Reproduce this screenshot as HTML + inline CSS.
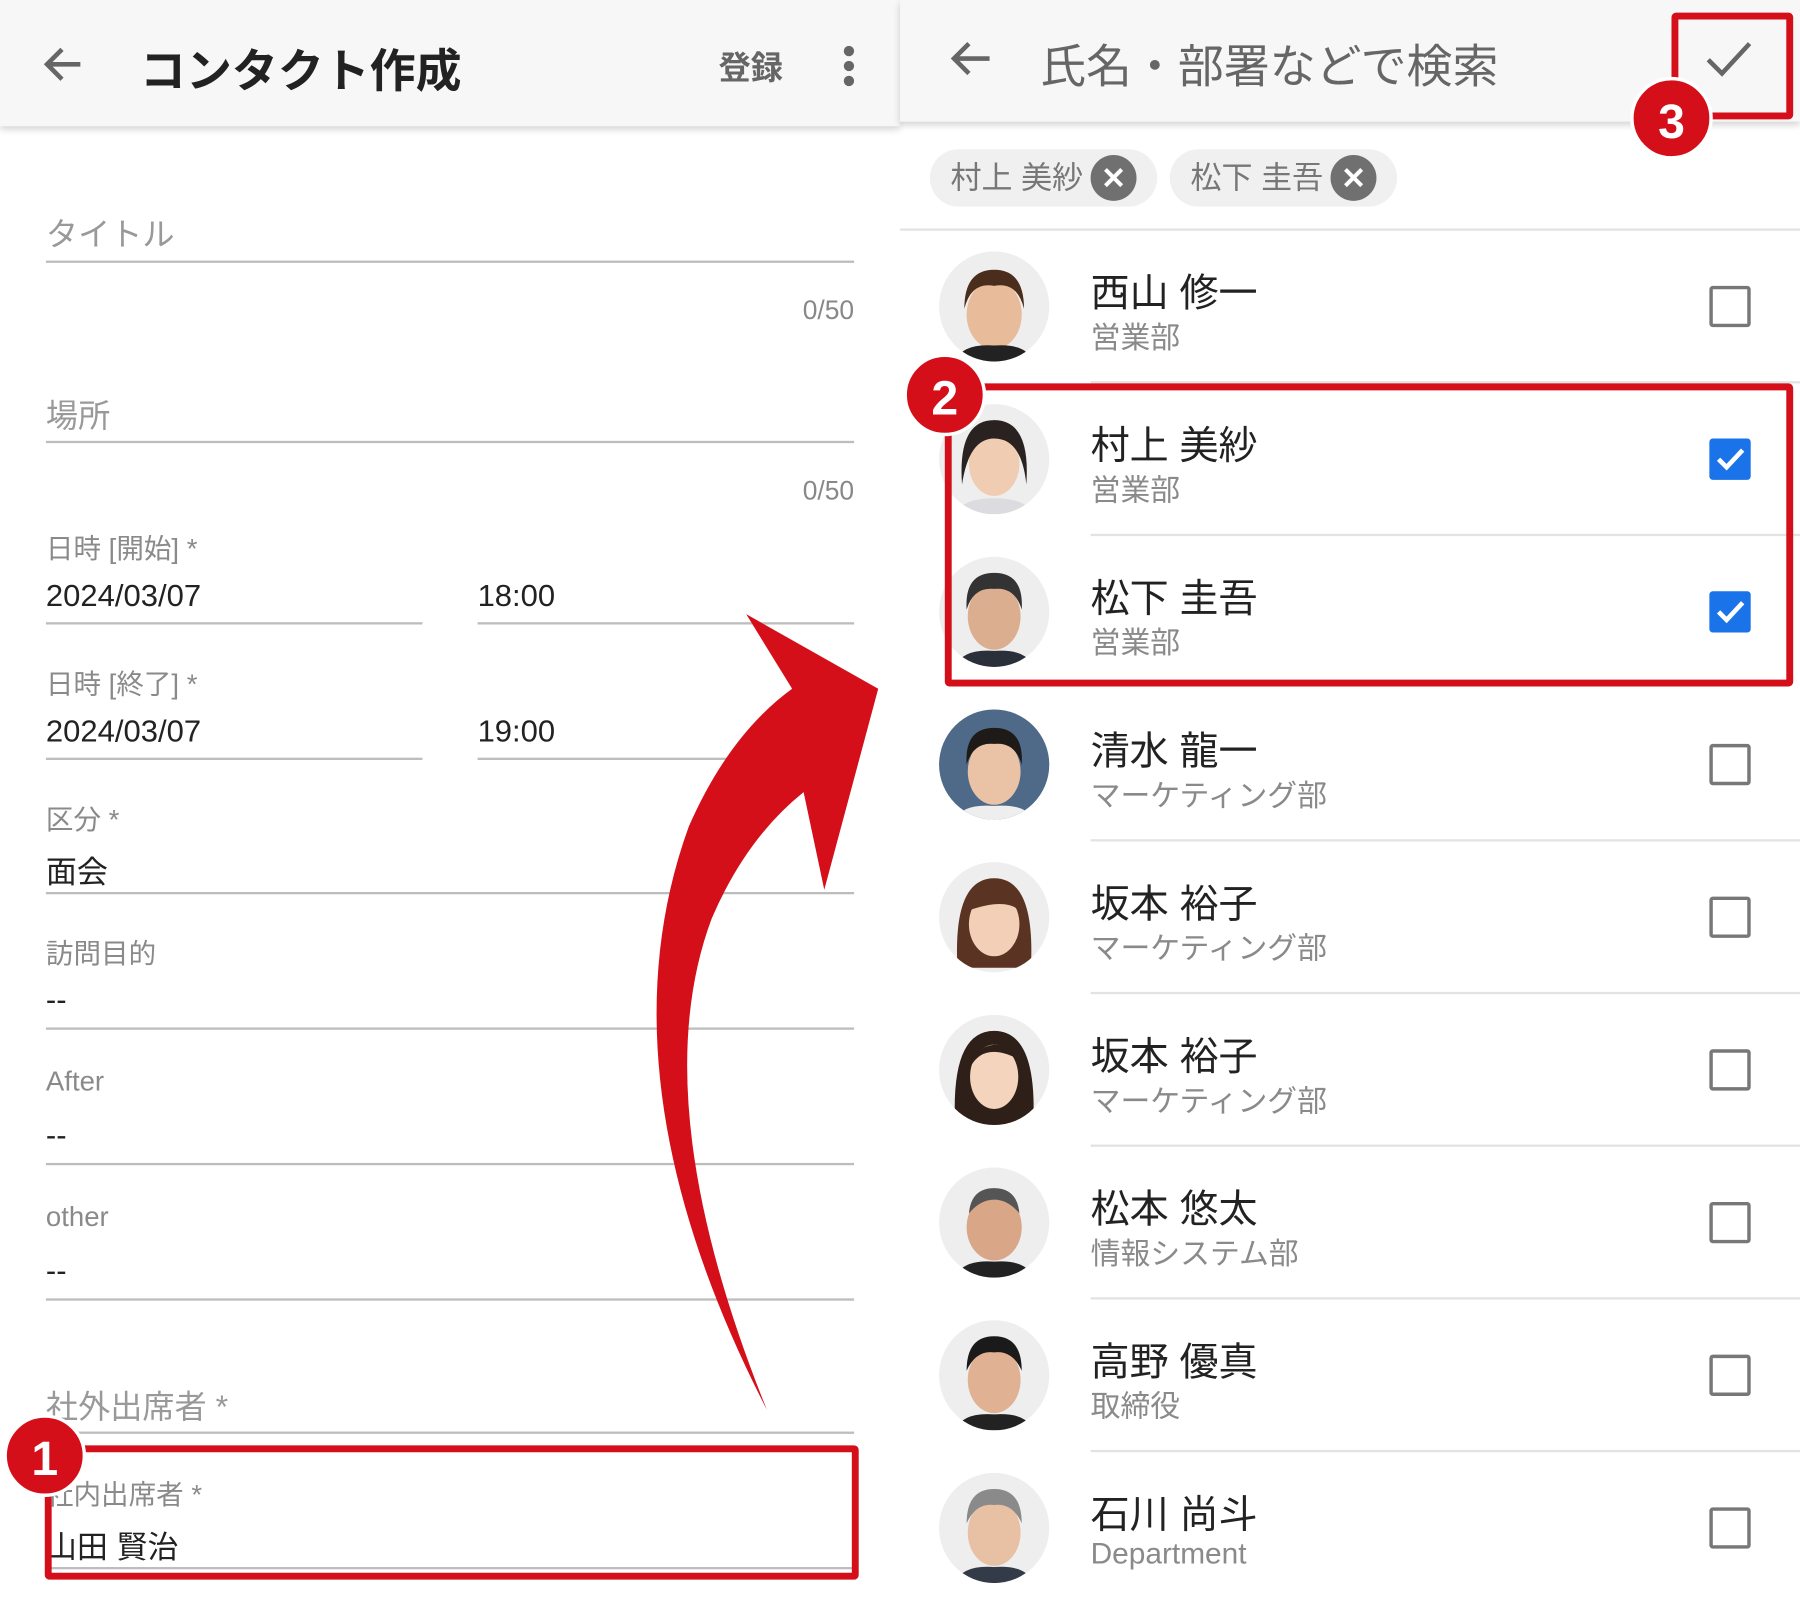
<!DOCTYPE html>
<html><head><meta charset="utf-8"><style>
*{margin:0;padding:0;box-sizing:border-box}
html,body{width:1800px;height:1599px;overflow:hidden;background:#fff}
#w{position:absolute;left:0;top:0;width:1568px;height:1393px;transform-origin:0 0;transform:scale(1.148,1.148);font-family:"Liberation Sans","Noto Sans CJK JP",sans-serif}
.a{position:absolute}
.hdr{background:#f7f7f7;box-shadow:0 3px 6px rgba(0,0,0,.18)}
.ln{position:absolute;height:2px;background:#bdbdbd}
.lbl{position:absolute;color:#8a8a8a;font-size:24px}
.val{position:absolute;color:#222;font-size:27px}
.sep{position:absolute;left:950px;right:0;height:2px;background:#e3e3e3}
.av{position:absolute;left:818px;width:96px;height:96px;border-radius:50%;overflow:hidden;background:#eee}
.nm{position:absolute;left:950px;font-size:34px;color:#222}
.dp{position:absolute;left:950px;font-size:26px;color:#8a8a8a}
.cb{position:absolute;left:1489px;width:36px;height:36px;border:3px solid #777;border-radius:3px}
.cbk{background:#1a73e8;border-color:#1a73e8}
.red{position:absolute;border:6px solid #d40f1a;border-radius:4px}
.bd{position:absolute;width:72px;height:72px;border-radius:50%;background:#d40f1a;color:#fff;font-weight:bold;font-size:42px;text-align:center;line-height:72px;border:3px solid #fff}
.chip{position:absolute;top:130px;height:50px;border-radius:25px;background:#f0f0f0;color:#777;font-size:27px;line-height:50px;padding-left:18px}
.x{position:absolute;top:5px;width:40px;height:40px;border-radius:50%;background:#707070;color:#fff;font-size:26px;line-height:40px;text-align:center;font-weight:bold}
.r{text-align:right;width:100px}
</style></head><body><div id="w">
<div class="a hdr" style="left:0;top:0;width:784px;height:110px"></div>
<svg class="a" style="left:36px;top:36px" width="40" height="40" viewBox="0 0 40 40"><path d="M34 20H6M18 7L5 20l13 13" stroke="#666" stroke-width="4" fill="none"/></svg>
<div class="a" style="left:122px;top:30px;font-size:40px;font-weight:bold;color:#222">コンタクト作成</div>
<div class="a" style="left:626px;top:38px;font-size:28px;color:#666;font-weight:bold">登録</div>
<div class="a" style="left:735px;top:40px;width:9px;height:9px;border-radius:50%;background:#666;box-shadow:0 13px 0 #666,0 26px 0 #666"></div>
<div class="a" style="left:40px;top:183px;font-size:28px;color:#999">タイトル</div>
<div class="ln" style="left:40px;width:704px;top:227px"></div>
<div class="a r" style="left:644px;top:257px;font-size:23px;color:#888">0/50</div>
<div class="a" style="left:40px;top:341px;font-size:28px;color:#999">場所</div>
<div class="ln" style="left:40px;width:704px;top:384px"></div>
<div class="a r" style="left:644px;top:414px;font-size:23px;color:#888">0/50</div>
<div class="lbl" style="left:40px;top:458px">日時 [開始] *</div>
<div class="val" style="left:40px;top:504px">2024/03/07</div><div class="val" style="left:416px;top:504px">18:00</div>
<div class="ln" style="left:40px;width:328px;top:542px"></div><div class="ln" style="left:416px;width:328px;top:542px"></div>
<div class="lbl" style="left:40px;top:576px">日時 [終了] *</div>
<div class="val" style="left:40px;top:622px">2024/03/07</div><div class="val" style="left:416px;top:622px">19:00</div>
<div class="ln" style="left:40px;width:328px;top:660px"></div><div class="ln" style="left:416px;width:328px;top:660px"></div>
<div class="lbl" style="left:40px;top:694px">区分 *</div>
<div class="val" style="left:40px;top:738px">面会</div>
<div class="ln" style="left:40px;width:704px;top:777px"></div>
<div class="lbl" style="left:40px;top:811px">訪問目的</div>
<div class="val" style="left:40px;top:856px">--</div>
<div class="ln" style="left:40px;width:704px;top:895px"></div>
<div class="lbl" style="left:40px;top:929px">After</div>
<div class="val" style="left:40px;top:974px">--</div>
<div class="ln" style="left:40px;width:704px;top:1013px"></div>
<div class="lbl" style="left:40px;top:1047px">other</div>
<div class="val" style="left:40px;top:1092px">--</div>
<div class="ln" style="left:40px;width:704px;top:1131px"></div>
<div class="a" style="left:40px;top:1204px;font-size:28px;color:#999">社外出席者 *</div>
<div class="ln" style="left:40px;width:704px;top:1247px"></div>
<div class="lbl" style="left:40px;top:1282px">社内出席者 *</div>
<div class="val" style="left:40px;top:1326px">山田 賢治</div>
<div class="ln" style="left:40px;width:704px;top:1365px"></div>
<div class="a hdr" style="left:784px;top:0;width:784px;height:106px"></div>
<svg class="a" style="left:826px;top:31px" width="40" height="40" viewBox="0 0 40 40"><path d="M36 20H6M18 7L5 20l13 13" stroke="#666" stroke-width="4" fill="none"/></svg>
<div class="a" style="left:906px;top:26px;font-size:40px;color:#666">氏名・部署などで検索</div>
<svg class="a" style="left:1484px;top:32px" width="44" height="40" viewBox="0 0 44 40"><path d="M4 20l12 12L40 6" stroke="#666" stroke-width="4" fill="none"/></svg>
<div class="chip" style="left:810px;width:198px">村上 美紗<div class="x" style="left:140px">✕</div></div>
<div class="chip" style="left:1019px;width:198px">松下 圭吾<div class="x" style="left:140px">✕</div></div>
<div class="a" style="left:784px;top:199px;width:784px;height:2px;background:#e3e3e3"></div>
<div class="av" style="top:219px"><svg width="96" height="96"><ellipse cx="48" cy="55" rx="24" ry="30" fill="#e8bb9a"/><path d="M22 50Q22 16 48 16Q74 16 74 50Q68 26 48 30Q28 26 22 50z" fill="#4a2d1c"/><path d="M14 96Q20 80 48 82Q76 80 82 96z" fill="#222"/></svg></div>
<div class="nm" style="top:228px">西山 修一</div><div class="dp" style="top:274px">営業部</div><div class="cb" style="top:249px"></div>
<div class="sep" style="top:332px"></div>
<div class="av" style="top:352px"><svg width="96" height="96"><ellipse cx="48" cy="52" rx="22" ry="28" fill="#f0cdb2"/><path d="M20 70Q16 14 48 14Q80 14 76 70Q72 30 48 30Q26 30 20 70z" fill="#2a2220"/><path d="M14 96Q20 82 48 82Q76 82 82 96z" fill="#dcdce0"/></svg></div>
<div class="nm" style="top:361px">村上 美紗</div><div class="dp" style="top:407px">営業部</div>
<div class="cb cbk" style="top:382px"><svg width="30" height="30"><path d="M5 15l7 7L26 7" stroke="#fff" stroke-width="4" fill="none"/></svg></div>
<div class="sep" style="top:465px"></div>
<div class="av" style="top:485px"><svg width="96" height="96"><ellipse cx="48" cy="52" rx="23" ry="29" fill="#dcae90"/><path d="M24 46Q22 14 48 14Q74 14 72 46Q66 26 48 28Q30 26 24 46z" fill="#333"/><path d="M14 96Q20 80 48 82Q76 80 82 96z" fill="#2a2f3a"/></svg></div>
<div class="nm" style="top:494px">松下 圭吾</div><div class="dp" style="top:540px">営業部</div>
<div class="cb cbk" style="top:515px"><svg width="30" height="30"><path d="M5 15l7 7L26 7" stroke="#fff" stroke-width="4" fill="none"/></svg></div>
<div class="av" style="top:618px;background:#4e6a88"><svg width="96" height="96"><ellipse cx="48" cy="54" rx="23" ry="29" fill="#eac3a6"/><path d="M24 48Q22 16 48 16Q74 16 72 48Q66 28 48 30Q30 28 24 48z" fill="#1e1a18"/><path d="M14 96Q20 82 48 84Q76 82 82 96z" fill="#eee"/></svg></div>
<div class="nm" style="top:627px">清水 龍一</div><div class="dp" style="top:673px">マーケティング部</div><div class="cb" style="top:648px"></div>
<div class="sep" style="top:731px"></div>
<div class="av" style="top:751px"><svg width="96" height="96"><path d="M16 92Q12 14 48 14Q84 14 80 92z" fill="#5a3322"/><ellipse cx="48" cy="54" rx="22" ry="28" fill="#f2cfb6"/><path d="M26 42Q34 22 60 26Q70 32 72 44Q60 30 26 42z" fill="#5a3322"/></svg></div>
<div class="nm" style="top:760px">坂本 裕子</div><div class="dp" style="top:806px">マーケティング部</div><div class="cb" style="top:781px"></div>
<div class="sep" style="top:864px"></div>
<div class="av" style="top:884px"><svg width="96" height="96"><path d="M14 96Q10 14 48 14Q86 14 82 96z" fill="#2e1f18"/><ellipse cx="48" cy="54" rx="21" ry="28" fill="#f4d4bd"/><path d="M28 44Q40 24 68 38Q60 26 48 26Q32 28 28 44z" fill="#2e1f18"/></svg></div>
<div class="nm" style="top:893px">坂本 裕子</div><div class="dp" style="top:939px">マーケティング部</div><div class="cb" style="top:914px"></div>
<div class="sep" style="top:997px"></div>
<div class="av" style="top:1017px"><svg width="96" height="96"><ellipse cx="48" cy="52" rx="24" ry="29" fill="#d9a688"/><path d="M26 40Q28 18 48 18Q68 18 70 40Q60 28 48 28Q36 28 26 40z" fill="#555"/><path d="M14 96Q20 80 48 82Q76 80 82 96z" fill="#222"/></svg></div>
<div class="nm" style="top:1026px">松本 悠太</div><div class="dp" style="top:1072px">情報システム部</div><div class="cb" style="top:1047px"></div>
<div class="sep" style="top:1130px"></div>
<div class="av" style="top:1150px"><svg width="96" height="96"><ellipse cx="48" cy="52" rx="23" ry="29" fill="#e0b293"/><path d="M24 44Q24 14 48 14Q72 14 72 44Q64 26 48 28Q32 26 24 44z" fill="#1a1a1a"/><path d="M14 96Q20 80 48 82Q76 80 82 96z" fill="#222"/></svg></div>
<div class="nm" style="top:1159px">高野 優真</div><div class="dp" style="top:1205px">取締役</div><div class="cb" style="top:1180px"></div>
<div class="sep" style="top:1263px"></div>
<div class="av" style="top:1283px"><svg width="96" height="96"><ellipse cx="48" cy="52" rx="23" ry="29" fill="#e8c0a4"/><path d="M24 44Q24 14 48 14Q72 14 72 44Q64 26 48 28Q32 26 24 44z" fill="#8a8a8a"/><path d="M14 96Q20 80 48 82Q76 80 82 96z" fill="#333a48"/></svg></div>
<div class="nm" style="top:1292px">石川 尚斗</div><div class="dp" style="top:1338px">Department</div><div class="cb" style="top:1313px"></div>
<svg class="a" style="left:0;top:0" width="1568" height="1393"><path d="M668 1228Q520 940 600 720Q635 640 690 600L650 535L765 600L718 775L700 690Q650 730 620 800Q560 960 668 1228z" fill="#d40f1a"/></svg>
<div class="red" style="left:823px;top:334px;width:739px;height:264px"></div>
<div class="bd" style="left:787px;top:308px">2</div>
<div class="red" style="left:1456px;top:11px;width:106px;height:93px"></div>
<div class="bd" style="left:1420px;top:67px">3</div>
<div class="red" style="left:39px;top:1259px;width:709px;height:117px"></div>
<div class="bd" style="left:3px;top:1232px">1</div>
</div></body></html>
